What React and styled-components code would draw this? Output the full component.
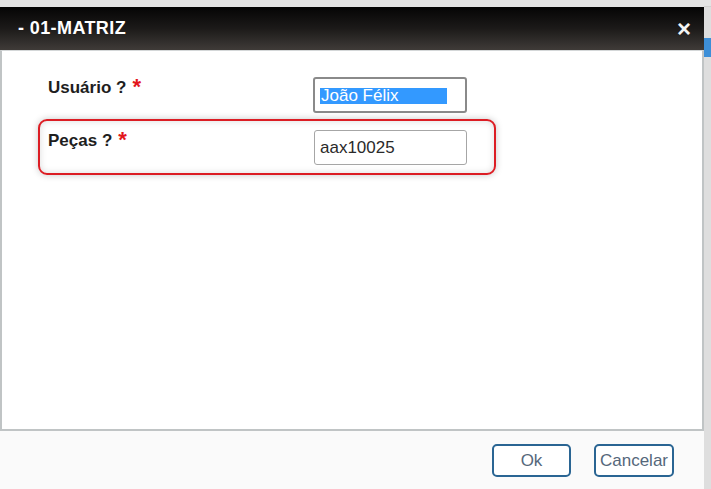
import React from "react";
import styled, { createGlobalStyle } from "styled-components";

const GlobalStyle = createGlobalStyle`
  html, body { margin: 0; padding: 0; background: #e6e6e6; }
  body { font-family: "Liberation Sans", Arial, sans-serif; }
  * { box-sizing: border-box; }
`;

const Page = styled.div`
  display: flex;
  width: 711px;
  height: 489px;
  overflow: hidden;
  background: #e4e4e4;
`;

const Dialog = styled.div`
  margin-top: 7px;
  width: 704px;
  display: flex;
  flex-direction: column;
  flex: none;
`;

const Side = styled.div`
  flex: 1;
  display: flex;
  flex-direction: column;
  background: #dedede;
  border-top: 1px solid #cfcfcf;
  margin-top: 6px;
`;

const SideAccent = styled.div`
  margin-top: 31px;
  height: 19px;
  background: #3d8fd8;
`;

const TitleBar = styled.div`
  height: 43px;
  display: flex;
  align-items: center;
  justify-content: space-between;
  padding: 0 13px 0 18px;
  background: linear-gradient(#050505 0%, #1c1a19 50%, #3f3b38 100%);
  color: #ffffff;
`;

const Title = styled.div`
  font-size: 18px;
  font-weight: bold;
  letter-spacing: 0.4px;
`;

const Close = styled.div`
  font-size: 24px;
  font-weight: bold;
  line-height: 1;
  color: #f4f4f4;
`;

const Body = styled.div`
  height: 381px;
  background: #ffffff;
  border: 2px solid #c0c4c5;
  border-top: 1px solid #d4d7d8;
  padding: 24px 0 0 36px;
  display: flex;
  flex-direction: column;
  gap: 4px;
`;

const Field = styled.div`
  width: 458px;
  display: grid;
  grid-template-columns: 266px 153px;
  align-items: start;
  padding: ${(p) => (p.$highlight ? "9px 8px 8px" : "0 8px")};
  border: 2px solid ${(p) => (p.$highlight ? "#dc1d24" : "transparent")};
  border-radius: 9px;
  box-shadow: ${(p) =>
    p.$highlight
      ? "0 0 7px rgba(0,0,0,0.22), inset 0 0 7px rgba(0,0,0,0.14)"
      : "none"};
`;

const Label = styled.div`
  padding-top: 1px;
  font-size: 17px;
  font-weight: bold;
  color: #1e1e1e;
  display: flex;
  align-items: flex-start;
`;

const Required = styled.span`
  color: #e3161c;
  font-size: 22px;
  line-height: 18px;
  margin-left: 6px;
`;

const TextBox = styled.div`
  height: ${(p) => (p.$focused ? "36px" : "35px")};
  margin-left: ${(p) => (p.$focused ? "-1px" : "0")};
  border: ${(p) => (p.$focused ? "2px solid #8a8a8a" : "1px solid #a6a6a6")};
  border-radius: 3px;
  background: #ffffff;
  display: flex;
  align-items: center;
  padding-left: 5px;
  font-size: 17px;
  color: #2a2a2a;
`;

const Selection = styled.span`
  display: block;
  width: 127px;
  height: 16px;
  line-height: 16px;
  margin-top: 1px;
  background: #3399ff;
  color: #ffffff;
  padding-left: 1px;
  white-space: nowrap;
`;

const Footer = styled.div`
  flex: 1;
  background: #fafafa;
  display: flex;
  justify-content: flex-end;
  align-items: flex-start;
  gap: 23px;
  padding: 13px 30px 0 0;
`;

const Button = styled.button`
  width: ${(p) => p.$w}px;
  height: 33px;
  padding: 0;
  border: 2px solid #2a6593;
  border-radius: 5px;
  background: #ffffff;
  color: #55677b;
  font-family: "Liberation Sans", Arial, sans-serif;
  font-size: 17px;
  cursor: pointer;
`;

export default function App() {
  return (
    <>
      <GlobalStyle />
      <Page>
        <Dialog>
          <TitleBar>
            <Title>- 01-MATRIZ</Title>
            <Close>×</Close>
          </TitleBar>
          <Body>
            <Field>
              <Label>
                Usuário ?<Required>*</Required>
              </Label>
              <TextBox $focused>
                <Selection>João Félix</Selection>
              </TextBox>
            </Field>
            <Field $highlight>
              <Label>
                Peças ?<Required>*</Required>
              </Label>
              <TextBox>aax10025</TextBox>
            </Field>
          </Body>
          <Footer>
            <Button $w={79}>Ok</Button>
            <Button $w={80}>Cancelar</Button>
          </Footer>
        </Dialog>
        <Side>
          <SideAccent />
        </Side>
      </Page>
    </>
  );
}
